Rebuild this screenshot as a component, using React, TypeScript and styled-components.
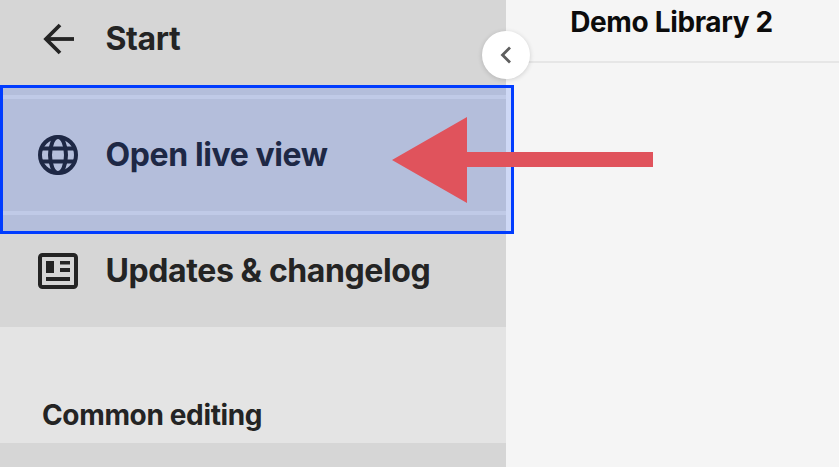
import React from "react";
import styled, { createGlobalStyle } from "styled-components";

const Global = createGlobalStyle`
  html, body { margin: 0; padding: 0; background: #f5f5f5; }
  body { font-family: Inter, "Liberation Sans", sans-serif; }
`;

const Page = styled.div`
  position: relative;
  display: flex;
  width: 839px;
  height: 467px;
  overflow: hidden;
`;

const Sidebar = styled.nav`
  width: 506px;
  flex: none;
  display: flex;
  flex-direction: column;
  background: #d6d6d6;
  margin-top: -17px;
`;

const Row = styled.a<{ $divider?: boolean }>`
  display: flex;
  align-items: center;
  gap: 27.5px;
  height: 112px;
  flex: none;
  padding-left: 38px;
  border-bottom: ${(p) => (p.$divider ? "4px solid #e4e4e4" : "none")};
  color: #242424;
  font-size: 32px;
  line-height: 38px;
  font-weight: 700;
  letter-spacing: -0.4px;
`;

const IconSlot = styled.span`
  display: flex;
  width: 40px;
  height: 40px;
  flex: none;
`;

const SectionHeader = styled.div`
  height: 116px;
  flex: none;
  box-sizing: border-box;
  background: #e4e4e4;
  padding: 70px 0 0 42px;
  color: #242424;
  font-size: 28px;
  line-height: 36px;
  font-weight: 700;
  letter-spacing: -0.35px;
`;

const Main = styled.main`
  flex: 1;
  background: #f5f5f5;
`;

const TopBar = styled.header`
  height: 61px;
  padding-right: 2px;
  border-bottom: 2px solid #e6e6e6;
  display: flex;
  justify-content: center;
  color: #0c0c0c;
  font-size: 28px;
  line-height: 44px;
  font-weight: 700;
  letter-spacing: -0.35px;
`;

const Toggle = styled.button`
  position: absolute;
  left: 482px;
  top: 31px;
  width: 48px;
  height: 48px;
  padding: 0;
  border: none;
  border-radius: 50%;
  background: #fff;
  box-shadow: 0 1px 5px rgba(0, 0, 0, 0.16);
  display: flex;
  align-items: center;
  justify-content: center;
`;

const Highlight = styled.div`
  position: absolute;
  left: 0;
  top: 85px;
  width: 514px;
  height: 149px;
  box-sizing: border-box;
  border: 3px solid #003cff;
  background: rgba(0, 65, 250, 0.155);
  background-clip: padding-box;
`;

const Pointer = styled.svg`
  position: absolute;
  left: 392px;
  top: 117px;
`;

const BackIcon = () => (
  <svg width="40" height="40" viewBox="0 0 40 40" fill="none" stroke="#242424" strokeWidth="3.8">
    <path d="M36 20H8" />
    <path d="M22 6 8 20l14 14" />
  </svg>
);

const GlobeIcon = () => (
  <svg width="40" height="40" viewBox="0 0 40 40" fill="none" stroke="#242424" strokeWidth="4">
    <circle cx="20" cy="20" r="18" />
    <ellipse cx="20" cy="20" rx="8" ry="18" />
    <path d="M3 13.5h34M3 26.5h34" />
  </svg>
);

const NewsIcon = () => (
  <svg width="40" height="40" viewBox="0 0 40 40">
    <rect x="2" y="4" width="36" height="32" rx="2.5" fill="none" stroke="#242424" strokeWidth="4" />
    <path fill="#242424" d="M8 10h8v12H8zM22 10h10v3.5H22zM22 17h10v4H22zM8 26h24v4H8z" />
  </svg>
);

const ChevronIcon = () => (
  <svg width="14" height="20" viewBox="0 0 14 20" fill="none" stroke="#5e5e5e" strokeWidth="2.8">
    <path d="M11 2.5 3.5 10 11 17.5" />
  </svg>
);

export default function App() {
  return (
    <>
      <Global />
      <Page>
        <Sidebar>
          <Row $divider>
            <IconSlot><BackIcon /></IconSlot>
            Start
          </Row>
          <Row $divider>
            <IconSlot><GlobeIcon /></IconSlot>
            Open live view
          </Row>
          <Row>
            <IconSlot><NewsIcon /></IconSlot>
            Updates &amp; changelog
          </Row>
          <SectionHeader>Common editing</SectionHeader>
        </Sidebar>
        <Main>
          <TopBar>Demo Library 2</TopBar>
        </Main>
        <Highlight />
        <Toggle aria-label="Collapse"><ChevronIcon /></Toggle>
        <Pointer width="262" height="88" viewBox="0 0 262 88">
          <path fill="#e0535c" d="M0 43 75 0V35H261V50H75V86Z" />
        </Pointer>
      </Page>
    </>
  );
}
